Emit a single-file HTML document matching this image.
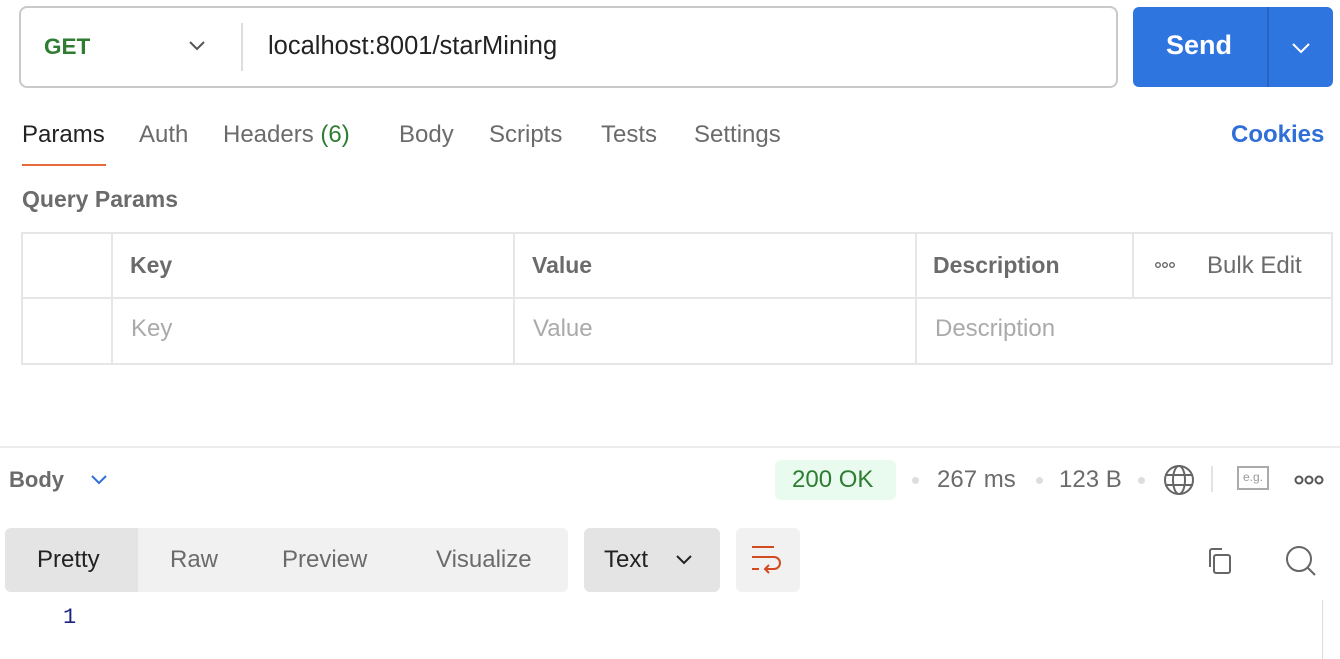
<!DOCTYPE html>
<html><head><style>
*{box-sizing:border-box;margin:0;padding:0}
body{width:1340px;height:659px;background:#fff;font-family:"Liberation Sans",sans-serif;position:relative;overflow:hidden;color:#6b6b6b}
.a{position:absolute;white-space:nowrap}
.t{font-size:24px}
</style></head><body>
<div class="a" style="left:19px;top:6px;width:1099px;height:82px;border:2px solid #c9c9c9;border-radius:8px"></div>
<div class="a" style="left:44px;top:34px;color:#2f7d32;font-weight:bold;font-size:22.5px">GET</div>
<svg class="a" style="left:188px;top:40px" width="18" height="12"><path d="M2 2l7 7 7-7" fill="none" stroke="#555" stroke-width="2"/></svg>
<div class="a" style="left:241px;top:23px;width:2px;height:48px;background:#ddd"></div>
<div class="a" style="left:268px;top:32px;color:#222;font-size:25.5px">localhost:8001/starMining</div>
<div class="a" style="left:1133px;top:7px;width:200px;height:80px;background:#2f75e0;border-radius:6px"></div>
<div class="a" style="left:1267px;top:7px;width:2px;height:80px;background:#2563c4"></div>
<div class="a" style="left:1166px;top:30px;color:#fff;font-weight:bold;font-size:27px">Send</div>
<svg class="a" style="left:1291px;top:42px" width="20" height="12"><path d="M2 2l8 8 8-8" fill="none" stroke="#fff" stroke-width="2"/></svg>

<div class="a t" style="left:22px;top:121px;color:#222">Params</div>
<div class="a" style="left:22px;top:164px;width:84px;height:2px;background:#e9693d"></div>
<div class="a t" style="left:139px;top:121px">Auth</div>
<div class="a t" style="left:223px;top:121px">Headers <span style="color:#2f7d32">(6)</span></div>
<div class="a t" style="left:399px;top:121px">Body</div>
<div class="a t" style="left:489px;top:121px">Scripts</div>
<div class="a t" style="left:601px;top:121px">Tests</div>
<div class="a t" style="left:694px;top:121px">Settings</div>
<div class="a t" style="left:1231px;top:121px;color:#2f6fd6;font-weight:bold">Cookies</div>
<div class="a" style="left:22px;top:186px;font-size:23px;font-weight:bold">Query Params</div>

<div class="a" style="left:21px;top:232px;width:1312px;height:133px;border:2px solid #e6e6e6"></div>
<div class="a" style="left:21px;top:297px;width:1312px;height:2px;background:#e6e6e6"></div>
<div class="a" style="left:111px;top:232px;width:2px;height:133px;background:#e6e6e6"></div>
<div class="a" style="left:513px;top:232px;width:2px;height:133px;background:#e6e6e6"></div>
<div class="a" style="left:915px;top:232px;width:2px;height:133px;background:#e6e6e6"></div>
<div class="a" style="left:1132px;top:232px;width:2px;height:66px;background:#e6e6e6"></div>
<div class="a" style="left:130px;top:252px;font-weight:bold;font-size:23px">Key</div>
<div class="a" style="left:532px;top:252px;font-weight:bold;font-size:23px">Value</div>
<div class="a" style="left:933px;top:252px;font-weight:bold;font-size:23px">Description</div>
<svg class="a" style="left:1155px;top:261px" width="22" height="8"><g fill="none" stroke="#666" stroke-width="1.4"><circle cx="3" cy="4" r="2.3"/><circle cx="10" cy="4" r="2.3"/><circle cx="17" cy="4" r="2.3"/></g></svg>
<div class="a t" style="left:1207px;top:252px">Bulk Edit</div>
<div class="a t" style="left:131px;top:315px;color:#aaa">Key</div>
<div class="a t" style="left:533px;top:315px;color:#aaa">Value</div>
<div class="a t" style="left:935px;top:315px;color:#aaa">Description</div>

<div class="a" style="left:0;top:446px;width:1340px;height:2px;background:#ececec"></div>
<div class="a" style="left:9px;top:467px;font-size:22px;font-weight:bold">Body</div>
<svg class="a" style="left:90px;top:474px" width="18" height="11"><path d="M2 2l7 7 7-7" fill="none" stroke="#2f6fd6" stroke-width="2"/></svg>
<div class="a" style="left:775px;top:460px;width:121px;height:40px;background:#e8fbee;border-radius:6px"></div>
<div class="a t" style="left:792px;top:466px;color:#2f7d32">200 OK</div>
<div class="a" style="left:912px;top:477px;width:7px;height:7px;border-radius:50%;background:#ddd"></div>
<div class="a t" style="left:937px;top:466px">267 ms</div>
<div class="a" style="left:1036px;top:477px;width:7px;height:7px;border-radius:50%;background:#ddd"></div>
<div class="a t" style="left:1059px;top:466px">123 B</div>
<div class="a" style="left:1138px;top:477px;width:7px;height:7px;border-radius:50%;background:#ddd"></div>
<svg class="a" style="left:1162px;top:463px" width="34" height="34"><g fill="none" stroke="#666" stroke-width="2"><circle cx="17" cy="17" r="14"/><ellipse cx="17" cy="17" rx="6" ry="14"/><path d="M3 12h28M3 22h28"/></g></svg>
<div class="a" style="left:1211px;top:466px;width:2px;height:26px;background:#e3e3e3"></div>
<div class="a" style="left:1237px;top:466px;width:32px;height:24px;border:2px solid #aaa;font-size:12px;color:#999;text-align:center;line-height:19px">e.g.</div>
<svg class="a" style="left:1294px;top:474px" width="30" height="12"><g fill="none" stroke="#555" stroke-width="2"><circle cx="5" cy="6" r="3.5"/><circle cx="15" cy="6" r="3.5"/><circle cx="25" cy="6" r="3.5"/></g></svg>

<div class="a" style="left:5px;top:528px;width:563px;height:64px;background:#f1f1f1;border-radius:6px"></div>
<div class="a" style="left:5px;top:528px;width:133px;height:64px;background:#e4e4e4;border-radius:6px 0 0 6px"></div>
<div class="a t" style="left:37px;top:546px;color:#222">Pretty</div>
<div class="a t" style="left:170px;top:546px">Raw</div>
<div class="a t" style="left:282px;top:546px">Preview</div>
<div class="a t" style="left:436px;top:546px">Visualize</div>
<div class="a" style="left:584px;top:528px;width:136px;height:64px;background:#e4e4e4;border-radius:6px"></div>
<div class="a t" style="left:604px;top:546px;color:#222">Text</div>
<svg class="a" style="left:675px;top:554px" width="18" height="11"><path d="M2 2l7 7 7-7" fill="none" stroke="#222" stroke-width="2"/></svg>
<div class="a" style="left:736px;top:528px;width:64px;height:64px;background:#f1f1f1;border-radius:6px"></div>
<svg class="a" style="left:750px;top:544px" width="36" height="32"><g fill="none" stroke="#d24a1f" stroke-width="2"><path d="M2 3h22M2 13h22a6 6 0 0 1 0 12h-8M2 25h7M19 21l-4 4 4 4"/></g></svg>
<svg class="a" style="left:1204px;top:545px" width="32" height="32"><g fill="none" stroke="#666" stroke-width="2"><rect x="10" y="10" width="16" height="18" rx="2"/><path d="M6 22V6a2 2 0 0 1 2-2h10"/></g></svg>
<svg class="a" style="left:1283px;top:543px" width="36" height="36"><g fill="none" stroke="#666" stroke-width="2"><circle cx="16" cy="16" r="12"/><path d="M25 25l7 7"/></g></svg>
<div class="a" style="left:63px;top:605px;font-family:'Liberation Mono',monospace;font-size:22px;color:#1a237e">1</div>
<div class="a" style="left:1322px;top:600px;width:1px;height:59px;background:#ddd"></div>
</body></html>
